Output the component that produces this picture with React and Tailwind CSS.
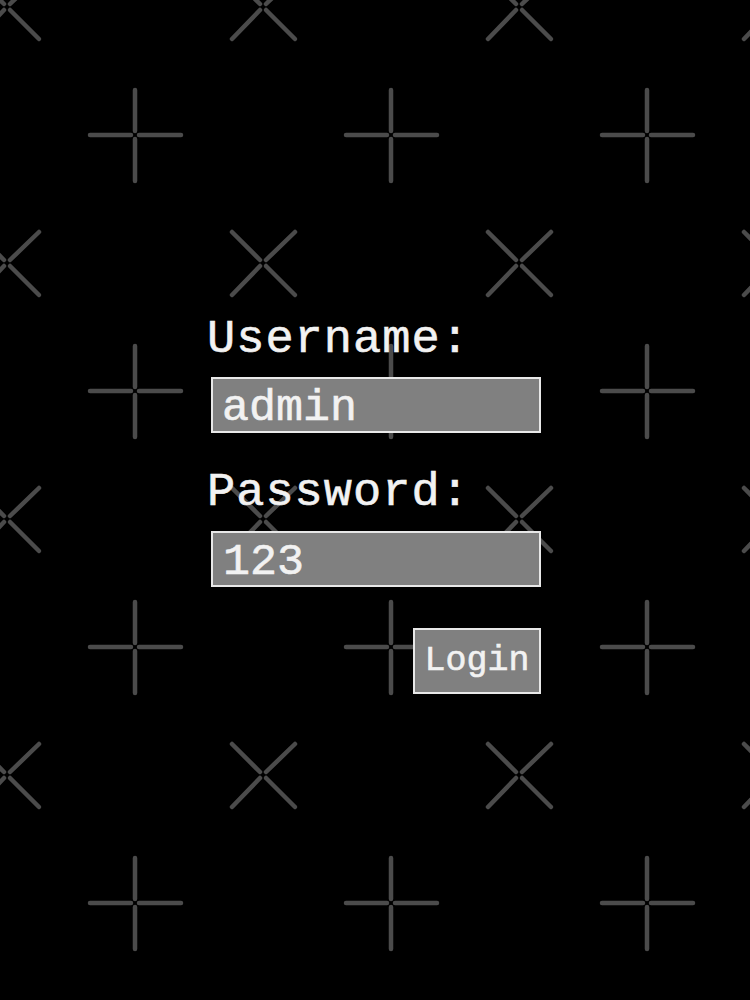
import { useState } from "react";

const plusX = [135, 391, 647];
const plusY = [135, 391, 647, 903];
const crossX = [7, 263, 519, 775];
const crossY = [7, 263, 519, 775];

function Pattern() {
  const lines = [];
  plusX.forEach((x) =>
    plusY.forEach((y) => {
      lines.push([x, y - 45, x, y - 4], [x, y + 4, x, y + 46], [x - 45, y, x - 4, y], [x + 4, y, x + 46, y]);
    })
  );
  crossX.forEach((x) =>
    crossY.forEach((y) => {
      lines.push(
        [x - 31, y - 31, x - 3, y - 3],
        [x + 3, y + 3, x + 32, y + 32],
        [x + 32, y - 31, x + 3, y - 3],
        [x - 3, y + 3, x - 31, y + 32]
      );
    })
  );
  return (
    <svg className="absolute inset-0 pointer-events-none" width="750" height="1000" viewBox="0 0 750 1000">
      {lines.map((l, i) => (
        <line key={i} x1={l[0]} y1={l[1]} x2={l[2]} y2={l[3]} stroke="#4b4b4b" strokeWidth="4.5" strokeLinecap="round" />
      ))}
    </svg>
  );
}

export default function App() {
  const [username, setUsername] = useState("admin");
  const [password, setPassword] = useState("123");

  return (
    <div className="relative w-[750px] h-[1000px] bg-black overflow-hidden font-['Liberation_Mono',monospace] text-[#f2f2f2] [-webkit-text-stroke:0.6px_#f2f2f2]">
      <Pattern />
      <div className="relative w-[334px] ml-[207px] pt-[316px] flex flex-col">
        <label className="block text-[47px] leading-[47px] h-[47px] tracking-[1px] mb-[14px]">Username:</label>
        <input
          type="text"
          value={username}
          onChange={(e) => setUsername(e.target.value)}
          className="ml-[4px] w-[330px] h-[56px] border-2 border-[#e8e8e8] bg-[#808080] pl-[9px] pt-[6px] pb-0 text-[45px] leading-[46px] text-[#f2f2f2] outline-none"
        />
        <label className="block text-[47px] leading-[47px] h-[47px] tracking-[1px] mt-[36px] mb-[15px]">Password:</label>
        <input
          type="text"
          value={password}
          onChange={(e) => setPassword(e.target.value)}
          className="ml-[4px] w-[330px] h-[56px] border-2 border-[#e8e8e8] bg-[#808080] pl-[10px] pt-[6px] pb-0 text-[45px] leading-[46px] text-[#f2f2f2] outline-none"
        />
        <div className="flex justify-end mt-[41px]">
          <button className="w-[128px] h-[66px] border-2 border-[#e8e8e8] bg-[#808080] flex items-center justify-center text-[35px] leading-none text-[#f2f2f2]">
            Login
          </button>
        </div>
      </div>
    </div>
  );
}
